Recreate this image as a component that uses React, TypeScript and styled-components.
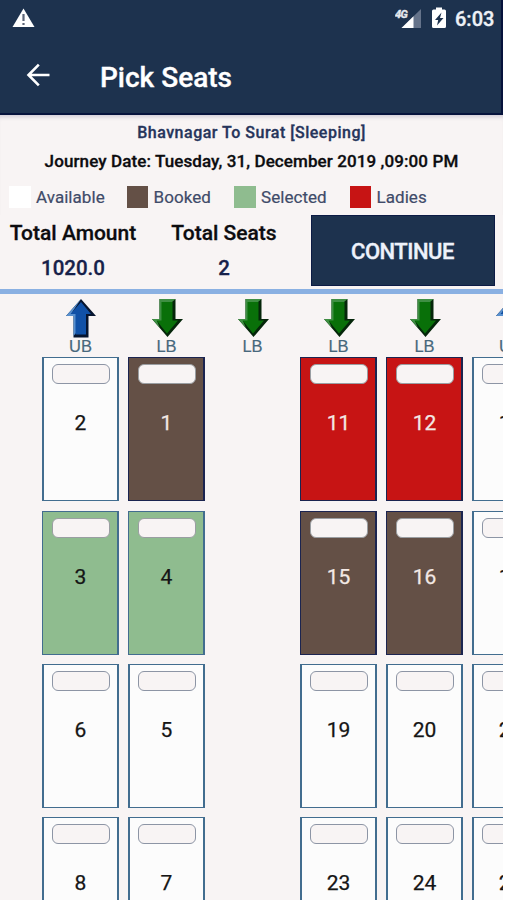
import React from "react";
import styled, { createGlobalStyle } from "styled-components";

const navy = "#1d324e";
const paper = "#f8f4f4";

type Status = "available" | "booked" | "selected" | "ladies";

const fills: Record<Status, string> = {
  available: "#fcfcfc",
  booked: "#645046",
  selected: "#8fbc8f",
  ladies: "#c71414",
};

const GlobalStyle = createGlobalStyle`
  * { box-sizing: border-box; }
  html, body { margin: 0; background: #fff; overflow: hidden; }
  body { font-family: Roboto, sans-serif; }
`;

const Screen = styled.main`
  display: flex;
  flex-direction: column;
  width: 503px;
  height: 900px;
  overflow: hidden;
  background: ${paper};
`;

const Header = styled.header`
  flex: none;
  height: 115px;
  background: ${navy};
  border-right: 2px solid #06133c;
  border-bottom: 2px solid #06133c;
  color: #fff;
`;

const StatusBar = styled.div`
  display: flex;
  height: 38px;
  padding: 0 7px 0 12px;
`;

const StatusIcons = styled.div`
  display: flex;
  margin-left: auto;
`;

const BatterySlot = styled.div`
  margin-left: 10px;
`;

const Clock = styled.time`
  width: 39px;
  margin-left: 9.5px;
  font-size: 20px;
  font-weight: 500;
  line-height: 39px;
  white-space: nowrap;
  color: #eef1f6;
  -webkit-text-stroke: 0.35px;
`;

const AppBar = styled.div`
  display: flex;
  align-items: center;
  height: 76px;
  padding-left: 26px;
`;

const BackButton = styled.button`
  display: flex;
  padding: 0;
  border: 0;
  background: none;
  color: #fff;
  margin-top: -2px;
`;

const Title = styled.h1`
  margin: 3px 0 0 50px;
  font-size: 28px;
  font-weight: 500;
  line-height: 34px;
  -webkit-text-stroke: 0.35px;
`;

const Info = styled.section`
  flex: none;
  height: 100px;
  box-shadow: inset 0 5px 4px -3px #cfcad4;
  padding-top: 7px;
`;

const Line = styled.p<{ $size: number; $height: number; $spacing: number; $color: string }>`
  margin: 0;
  text-align: center;
  font-weight: 500;
  font-size: ${(p) => p.$size}px;
  line-height: ${(p) => p.$height}px;
  letter-spacing: ${(p) => p.$spacing}px;
  color: ${(p) => p.$color};
  white-space: nowrap;
  -webkit-text-stroke: 0.3px;
`;

const Legend = styled.div`
  display: grid;
  grid-template-columns: 117.5px 107.5px 115.5px 1fr;
  padding: 7px 0 0 9px;
`;

const LegendItem = styled.div`
  display: flex;
  align-items: center;
  gap: 5.5px;
  height: 22px;
  font-size: 17px;
  letter-spacing: 0.05px;
  color: #3f4b69;
`;

const LegendLabel = styled.span`
  margin-top: -1px;
  -webkit-text-stroke: 0.2px;
`;

const Swatch = styled.span<{ $status: Status }>`
  width: 21.5px;
  height: 21.5px;
  background: ${(p) => (p.$status === "available" ? "#fff" : fills[p.$status])};
`;

const Summary = styled.section`
  flex: none;
  display: grid;
  grid-template-columns: 146px 156px 184px;
  height: 79px;
  border-bottom: 5px solid #8ab0e2;
`;

const Total = styled.div`
  display: flex;
  flex-direction: column;
  align-items: center;
  padding-top: 1px;
  font-size: 21px;
  font-weight: 500;
  line-height: 35px;
  color: #0c0c0f;
  white-space: nowrap;
  -webkit-text-stroke: 0.3px;
`;

const Amount = styled.strong`
  font-size: 20.5px;
  font-weight: 500;
  color: #17214a;
`;

const ContinueButton = styled.button`
  width: 184px;
  height: 71px;
  margin-left: 8.5px;
  padding: 1px 0 0;
  border: 1px solid #0c1b45;
  background: ${navy};
  color: #eef2fb;
  font: 500 22px Roboto, sans-serif;
  letter-spacing: -0.5px;
  -webkit-text-stroke: 0.35px;
`;

const Deck = styled.section`
  display: grid;
  grid-template-columns: repeat(6, 77px);
  grid-template-rows: 54px repeat(4, 144px);
  gap: 9.3px 9px;
  padding: 0 0 0 42px;
`;

const Berth = styled.div`
  display: flex;
  flex-direction: column;
  align-items: center;
  padding-top: 5px;
  font: 16.5px/16px "Liberation Sans", sans-serif;
  color: #47687c;
  -webkit-text-stroke: 0.2px;
`;

const Arrow = styled.svg`
  flex: none;
  width: 32px;
  height: 39px;
`;

const SeatBox = styled.button<{ $status: Status }>`
  display: flex;
  flex-direction: column;
  align-items: center;
  padding: 6px 0 0;
  border: solid
    ${(p) => (p.$status === "booked" || p.$status === "ladies" ? "#1b2450" : "#426d8f")};
  border-width: 1px 2px 1px ${(p) => (p.$status === "available" ? "2px" : "1px")};
  padding-left: ${(p) => (p.$status === "available" ? "0" : "1px")};
  background: ${(p) => fills[p.$status]};
  color: ${(p) => (p.$status === "booked" || p.$status === "ladies" ? "#f3e9e5" : "#151515")};
  font: 21px/24px Roboto, sans-serif;
  -webkit-text-stroke: 0.25px;
`;

const Pillow = styled.span<{ $status: Status }>`
  flex: none;
  width: 58px;
  height: 20px;
  margin-bottom: 27px;
  border: 1.5px solid ${(p) => (p.$status === "available" ? "#8d95a5" : "#9a9ea2")};
  border-radius: 6px;
  background: ${paper};
`;

const Aisle = styled.div``;

const BerthArrow = ({ up }: { up: boolean }) => {
  const edge = up ? "#07152f" : "#05260a";
  const light = up ? "#5890cf" : "#3f8f43";
  const face = up ? "#1151a7" : "#097009";
  const d = up ? "M16 0 31 17H23.5V38.5H8.5V17H1Z" : "M8.5 0H24.5V20H32L16.5 38 1 20H8.5Z";
  return (
    <Arrow viewBox="0 0 32 39">
      <path d={d} fill={edge} />
      {up ? (
        <>
          <path d="M16 0 1 17H8.5V37L11 34V15H6Z" fill={light} />
          <path d="M16 3 26 15H21V35.5H10.5V15H5.5Z" fill={face} />
        </>
      ) : (
        <>
          <path d="M8.5 0H24.5L21 3H11V22H6L9 29 1 20H8.5Z" fill={light} />
          <path d="M10.5 3H21.5V21.5H27L16 34.5 5.5 21.5H10.5Z" fill={face} />
        </>
      )}
    </Arrow>
  );
};

const WarningIcon = () => (
  <svg width="23" height="38" viewBox="0 0 23 38">
    <path d="M11.5 8.5 22.5 27H.5Z" fill="#fff" />
    <path d="M11.5 14v7M11.5 23v2" stroke="#5d6678" strokeWidth="2.2" />
  </svg>
);

const SignalIcon = () => (
  <svg width="27" height="38" viewBox="0 0 27 38">
    <path d="M26 9V28H6.5Z" fill="#65738a" />
    <path d="M18.5 16.3V28H6.5Z" fill="#fff" />
    <text x="0" y="17.5" fontSize="11" fontWeight="700" fontStyle="italic" letterSpacing="-.6" fill="#e5e9ef" stroke="#e5e9ef" strokeWidth=".4">
      4G
    </text>
  </svg>
);

const BatteryIcon = () => (
  <svg width="14" height="38" viewBox="0 0 14 38">
    <path d="M4 7.5H10V9.5H12.5Q14 9.5 14 11V26.5Q14 28 12.5 28H1.5Q0 28 0 26.5V11Q0 9.5 1.5 9.5H4Z" fill="#fff" />
    <path d="M9.5 12.5 3 20H6.2L5 25.5 11.5 18H8Z" fill={navy} />
  </svg>
);

const BackIcon = () => (
  <svg width="24" height="24" viewBox="0 0 24 24" fill="none" stroke="currentColor" strokeWidth="2.6">
    <path d="M12.8 1.7 2.5 12 12.8 22.3M2.5 12H23.5" />
  </svg>
);

const legend: [string, Status][] = [
  ["Available", "available"],
  ["Booked", "booked"],
  ["Selected", "selected"],
  ["Ladies", "ladies"],
];

const berths = ["UB", "LB", "LB", "LB", "LB", "UB"];

type Seat = { no: number; status: Status } | null;
const seat = (no: number, status: Status = "available"): Seat => ({ no, status });

const rows: Seat[][] = [
  [seat(2), seat(1, "booked"), null, seat(11, "ladies"), seat(12, "ladies"), seat(13)],
  [seat(3, "selected"), seat(4, "selected"), null, seat(15, "booked"), seat(16, "booked"), seat(17)],
  [seat(6), seat(5), null, seat(19), seat(20), seat(21)],
  [seat(8), seat(7), null, seat(23), seat(24), seat(25)],
];

export default function App() {
  return (
    <>
      <GlobalStyle />
      <Screen>
        <Header>
          <StatusBar>
            <WarningIcon />
            <StatusIcons>
              <SignalIcon />
              <BatterySlot>
                <BatteryIcon />
              </BatterySlot>
              <Clock>6:03</Clock>
            </StatusIcons>
          </StatusBar>
          <AppBar>
            <BackButton aria-label="Back">
              <BackIcon />
            </BackButton>
            <Title>Pick Seats</Title>
          </AppBar>
        </Header>
        <Info>
          <Line $size={16} $height={21} $spacing={0.5} $color="#26345b">
            Bhavnagar To Surat [Sleeping]
          </Line>
          <Line $size={17} $height={36} $spacing={0.1} $color="#0c0c0f">
            Journey Date: Tuesday, 31, December 2019 ,09:00 PM
          </Line>
          <Legend>
            {legend.map(([label, status]) => (
              <LegendItem key={label}>
                <Swatch $status={status} />
                <LegendLabel>{label}</LegendLabel>
              </LegendItem>
            ))}
          </Legend>
        </Info>
        <Summary>
          <Total>
            Total Amount
            <Amount>1020.0</Amount>
          </Total>
          <Total>
            Total Seats
            <Amount>2</Amount>
          </Total>
          <ContinueButton>CONTINUE</ContinueButton>
        </Summary>
        <Deck>
          {berths.map((label, i) => (
            <Berth key={i}>
              <BerthArrow up={label === "UB"} />
              {label}
            </Berth>
          ))}
          {rows.flat().map((s, i) =>
            s ? (
              <SeatBox key={i} $status={s.status}>
                <Pillow $status={s.status} />
                {s.no}
              </SeatBox>
            ) : (
              <Aisle key={i} />
            )
          )}
        </Deck>
      </Screen>
    </>
  );
}
